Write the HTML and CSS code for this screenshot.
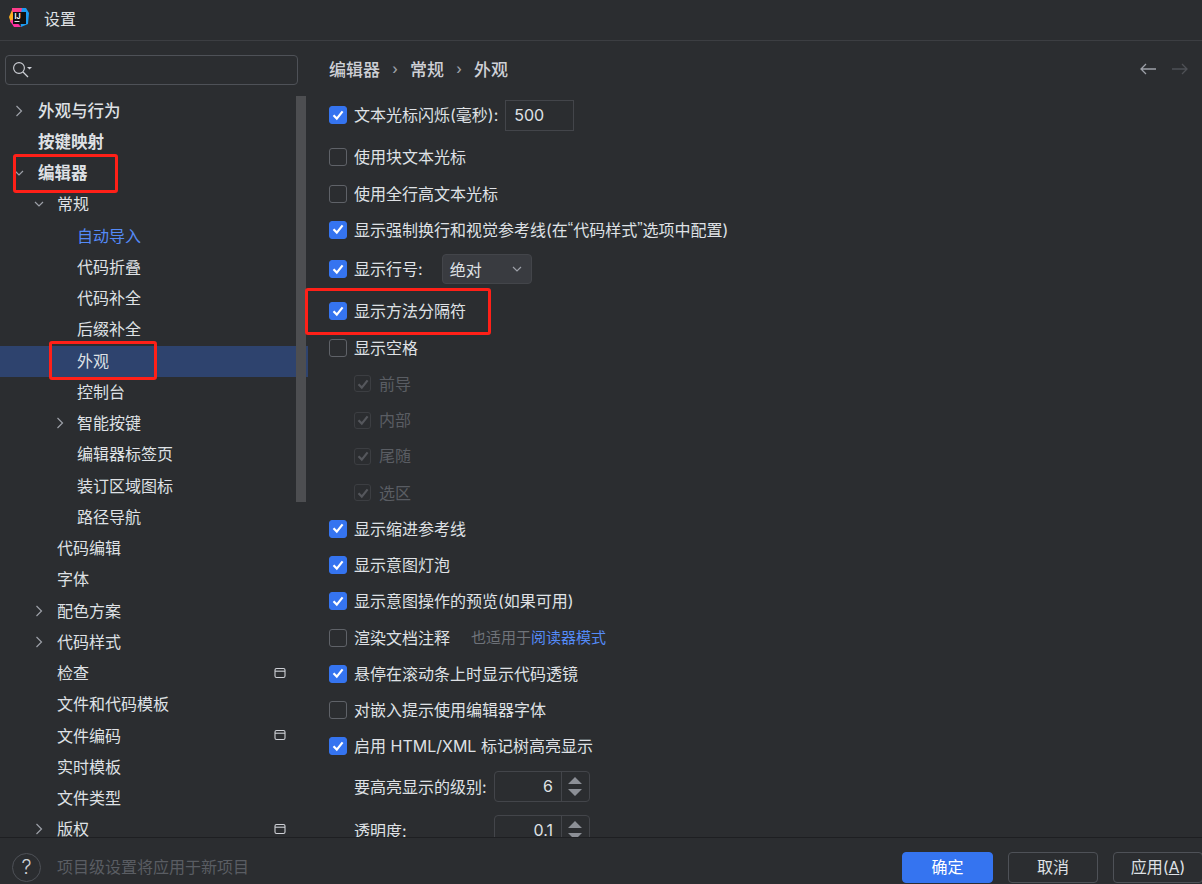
FILE: index.html
```html
<!DOCTYPE html>
<html lang="zh-CN">
<head>
    <meta charset="UTF-8">
    <meta name="viewport" content="width=device-width, initial-scale=1.0">
    <title>设置</title>
    <link rel="stylesheet" href="styles.css">
</head>
<body>
    <svg class="defs" width="0" height="0">
        <symbol id="i-right" viewBox="0 0 12 12"><path d="M3.5 1 8.5 6 3.5 11" fill="none" stroke="#9da0a8" stroke-width="1.2"/></symbol>
        <symbol id="i-down" viewBox="0 0 12 12"><path d="M2 4 6 8 10 4" fill="none" stroke="#9da0a8" stroke-width="1.2"/></symbol>
        <symbol id="i-badge" viewBox="0 0 12 12"><rect x="1" y="1.5" width="10" height="9" rx="1.5" fill="none" stroke="#ced0d6" stroke-width="1.1"/><path d="M1 4.2H11" stroke="#ced0d6" stroke-width="1.1"/></symbol>
        <symbol id="i-check" viewBox="0 0 18 18"><path d="M4.5 9.2 7.8 12.6 13.6 5.4" fill="none" stroke="#fff" stroke-width="2.2"/></symbol>
        <symbol id="i-check-off" viewBox="0 0 18 18"><path d="M4.5 9.2 7.8 12.6 13.6 5.4" fill="none" stroke="#55575c" stroke-width="2.2"/></symbol>
        <symbol id="i-spin" viewBox="0 0 16 24"><path d="M8 3 15 10H1Z M8 22 1 15H15Z" fill="#8c8f96"/></symbol>
    </svg>

    <div class="window">
        <header class="titlebar">
            <svg class="logo" width="20" height="20" viewBox="0 0 20 20">
                <path d="M11 0h6l3 5-1 11-7 3Z" fill="#1c9bf0"/>
                <path d="M3 0h10l-1 5-9 3Z" fill="#ff3d8b"/>
                <path d="M0 9 3 2l3 13H2Z" fill="#ffb01f"/>
                <path d="M1 13l4-2 7 8H5Z" fill="#ff2fa0"/>
                <rect x="4" y="4" width="13" height="12" fill="#111"/>
                <text x="5.5" y="10.5" class="logo-text">IJ</text>
                <rect x="5.5" y="13" width="5" height="1" fill="#ddd"/>
            </svg>
            <span>设置</span>
        </header>

        <div class="main">
            <aside class="sidebar">
                <div class="search">
                    <svg width="20" height="18" viewBox="0 0 20 18">
                        <circle cx="6" cy="7" r="5.4" fill="none" stroke="#ced0d6" stroke-width="1.1"/>
                        <path d="M10 11 15 16" stroke="#ced0d6" stroke-width="1.2"/>
                        <path d="M14 6h5L16.5 8.5Z" fill="#ced0d6"/>
                    </svg>
                </div>
                <div class="tree-wrap">
                    <div class="tree">
                        <div class="row lv0 medium"><svg class="arrow"><use href="#i-right"/></svg>外观与行为</div>
                        <div class="row lv0 bold"><span class="arrow"></span>按键映射</div>
                        <div class="row lv0 bold"><svg class="arrow"><use href="#i-down"/></svg>编辑器</div>
                        <div class="row lv1"><svg class="arrow"><use href="#i-down"/></svg>常规</div>
                        <div class="row lv2 link"><span class="arrow"></span>自动导入</div>
                        <div class="row lv2"><span class="arrow"></span>代码折叠</div>
                        <div class="row lv2"><span class="arrow"></span>代码补全</div>
                        <div class="row lv2"><span class="arrow"></span>后缀补全</div>
                        <div class="row lv2 selected"><span class="arrow"></span>外观</div>
                        <div class="row lv2"><span class="arrow"></span>控制台</div>
                        <div class="row lv2"><svg class="arrow"><use href="#i-right"/></svg>智能按键</div>
                        <div class="row lv2"><span class="arrow"></span>编辑器标签页</div>
                        <div class="row lv2"><span class="arrow"></span>装订区域图标</div>
                        <div class="row lv2"><span class="arrow"></span>路径导航</div>
                        <div class="row lv1"><span class="arrow"></span>代码编辑</div>
                        <div class="row lv1"><span class="arrow"></span>字体</div>
                        <div class="row lv1"><svg class="arrow"><use href="#i-right"/></svg>配色方案</div>
                        <div class="row lv1"><svg class="arrow"><use href="#i-right"/></svg>代码样式</div>
                        <div class="row lv1"><span class="arrow"></span>检查<svg class="badge"><use href="#i-badge"/></svg></div>
                        <div class="row lv1"><span class="arrow"></span>文件和代码模板</div>
                        <div class="row lv1"><span class="arrow"></span>文件编码<svg class="badge"><use href="#i-badge"/></svg></div>
                        <div class="row lv1"><span class="arrow"></span>实时模板</div>
                        <div class="row lv1"><span class="arrow"></span>文件类型</div>
                        <div class="row lv1"><svg class="arrow"><use href="#i-right"/></svg>版权<svg class="badge"><use href="#i-badge"/></svg></div>
                    </div>
                    <div class="scrollbar"></div>
                </div>
            </aside>

            <section class="panel">
                <div class="crumbs">
                    <span>编辑器</span><i>›</i><span>常规</span><i>›</i><span>外观</span>
                    <div class="nav">
                        <svg width="18" height="14" viewBox="0 0 18 14"><path d="M17 7H2M7 2 2 7l5 5" fill="none" stroke="#9da0a8" stroke-width="1.3"/></svg>
                        <svg width="18" height="14" viewBox="0 0 18 14"><path d="M2 7H17M12 2 17 7l-5 5" fill="none" stroke="#4e5055" stroke-width="1.3"/></svg>
                    </div>
                </div>

                <div class="opt first"><span class="box on"><svg><use href="#i-check"/></svg></span>文本光标闪烁(毫秒):<span class="field">500</span></div>
                <div class="opt gap-6"><span class="box"></span>使用块文本光标</div>
                <div class="opt"><span class="box"></span>使用全行高文本光标</div>
                <div class="opt"><span class="box on"><svg><use href="#i-check"/></svg></span>显示强制换行和视觉参考线(在<span class="quote">“</span>代码样式<span class="quote">”</span>选项中配置)</div>
                <div class="opt gap-3"><span class="box on"><svg><use href="#i-check"/></svg></span>显示行号:<span class="select">绝对<svg width="12" height="12"><use href="#i-down"/></svg></span></div>
                <div class="opt gap-6"><span class="box on"><svg><use href="#i-check"/></svg></span>显示方法分隔符</div>
                <div class="opt"><span class="box"></span>显示空格</div>
                <div class="opt sub off"><span class="box"><svg><use href="#i-check-off"/></svg></span>前导</div>
                <div class="opt sub off"><span class="box"><svg><use href="#i-check-off"/></svg></span>内部</div>
                <div class="opt sub off"><span class="box"><svg><use href="#i-check-off"/></svg></span>尾随</div>
                <div class="opt sub off"><span class="box"><svg><use href="#i-check-off"/></svg></span>选区</div>
                <div class="opt"><span class="box on"><svg><use href="#i-check"/></svg></span>显示缩进参考线</div>
                <div class="opt"><span class="box on"><svg><use href="#i-check"/></svg></span>显示意图灯泡</div>
                <div class="opt"><span class="box on"><svg><use href="#i-check"/></svg></span>显示意图操作的预览(如果可用)</div>
                <div class="opt"><span class="box"></span>渲染文档注释<span class="hint">也适用于<a>阅读器模式</a></span></div>
                <div class="opt"><span class="box on"><svg><use href="#i-check"/></svg></span>悬停在滚动条上时显示代码透镜</div>
                <div class="opt"><span class="box"></span>对嵌入提示使用编辑器字体</div>
                <div class="opt"><span class="box on"><svg><use href="#i-check"/></svg></span>启用 HTML/XML 标记树高亮显示</div>
                <div class="opt num gap-4"><label>要高亮显示的级别:</label><span class="spinner"><b>6</b><em><svg width="16" height="24"><use href="#i-spin"/></svg></em></span></div>
                <div class="opt num gap-8"><label>透明度:</label><span class="spinner"><b>0.1</b><em><svg width="16" height="24"><use href="#i-spin"/></svg></em></span></div>
            </section>
        </div>

        <footer class="footer">
            <span class="help">?</span>
            <span class="note">项目级设置将应用于新项目</span>
            <div class="buttons">
                <button class="primary">确定</button>
                <button>取消</button>
                <button>应用(<u>A</u>)</button>
            </div>
        </footer>

        <!-- red annotation boxes drawn on top of the screenshot -->
        <div class="mark mark-tree"></div>
        <div class="mark mark-item"></div>
        <div class="mark mark-opt"></div>
    </div>
</body>
</html>
```

FILE: styles.css
```css
* {
    box-sizing: border-box;
}
body {
    margin: 0;
    background-color: #2b2d30;
    color: #dfe1e5;
    font-family: Inter, "Noto Sans CJK SC", sans-serif;
    font-size: 16px;
}
.defs {
    position: absolute;
}
.window {
    position: relative;
    width: 1202px;
    height: 884px;
    display: flex;
    flex-direction: column;
    overflow: hidden;
}
.titlebar {
    height: 41px;
    flex: none;
    display: flex;
    align-items: center;
    padding-left: 9px;
    padding-bottom: 5px;
    border-bottom: 1px solid #3c3e42;
}
.titlebar span {
    margin-left: 15px;
}
.logo-text {
    font-size: 7px;
    font-weight: 700;
    fill: #fff;
}
.main {
    flex: 1;
    display: flex;
    min-height: 0;
}

/* left tree */
.sidebar {
    position: relative;
    z-index: 1;
    width: 308px;
    flex: none;
    overflow: hidden;
}
.search {
    height: 30px;
    width: 293px;
    margin: 14px 0 0 5px;
    border: 1px solid #4e5157;
    border-radius: 4px;
    padding: 5px 0 0 7px;
}
.tree-wrap {
    position: relative;
    margin-top: 11px;
}
.row {
    height: 31.25px;
    padding-bottom: 4px;
    display: flex;
    align-items: center;
    white-space: nowrap;
    position: relative;
}
.arrow {
    width: 12px;
    height: 12px;
    flex: none;
    margin-top: 2px;
}
.lv0 {
    padding-left: 13px;
}
.lv0 .arrow {
    margin-right: 13px;
}
.lv1 {
    padding-left: 33px;
}
.lv1 .arrow {
    margin-right: 12px;
}
.lv2 {
    padding-left: 54px;
}
.lv2 .arrow {
    margin-right: 11px;
}
.medium,
.bold {
    font-size: 16.5px;
}
.medium {
    font-weight: 500;
}
.bold {
    font-weight: 700;
}
.link {
    color: #548af7;
}
.selected {
    background-color: #2e436e;
}
.badge {
    position: absolute;
    left: 274px;
    top: 8px;
    width: 12px;
    height: 12px;
}
.scrollbar {
    position: absolute;
    left: 296px;
    top: 0;
    width: 10px;
    height: 406px;
    background-color: #4d4e51;
}

/* right panel */
.panel {
    flex: 1;
    padding-left: 329px;
    margin-left: -308px;
    overflow: hidden;
    min-width: 0;
}
.crumbs {
    height: 29px;
    margin-top: 13px;
    display: flex;
    align-items: center;
    font-size: 17px;
    font-weight: 500;
    color: #ced0d6;
    position: relative;
}
.crumbs i {
    font-style: normal;
    width: 30px;
    text-align: center;
    color: #9da0a8;
    font-size: 14px;
}
.nav {
    position: absolute;
    right: 14px;
    top: 8px;
    display: flex;
    gap: 13px;
}
.opt {
    height: 36.25px;
    display: flex;
    align-items: center;
    white-space: nowrap;
}
.first {
    margin-top: 13px;
}
.gap-6 {
    margin-top: 6px;
}
.gap-3 {
    margin-top: 3px;
}
.gap-4 {
    margin-top: 4px;
}
.gap-8 {
    margin-top: 8px;
}
.box {
    width: 18px;
    height: 18px;
    flex: none;
    margin: 2px 7px 0 0;
    border: 1.5px solid #5f6268;
    border-radius: 3px;
}
.box svg {
    display: block;
    width: 18px;
    height: 18px;
    margin: -1.5px;
}
.box.on {
    background-color: #3574f0;
    border-color: #3574f0;
}
.quote {
    font-family: "Liberation Sans", sans-serif;
}
.sub {
    padding-left: 25px;
}
.off {
    color: #5a5d63;
}
.off .box {
    width: 17px;
    height: 17px;
    border-color: #3c3e42;
    margin-right: 8px;
}
.field {
    width: 69px;
    height: 31px;
    margin: 2px 0 0 7px;
    padding-left: 8px;
    line-height: 29px;
    border: 1px solid #43454a;
}
.select {
    width: 90px;
    height: 30px;
    margin: 2px 0 0 19px;
    padding: 0 8px 0 7px;
    display: flex;
    align-items: center;
    justify-content: space-between;
    background-color: #393b40;
    border: 1px solid #43454a;
    border-radius: 4px;
}
.hint {
    margin-left: 21px;
    font-size: 15px;
    color: #6f737a;
}
.hint a {
    color: #548af7;
}
.num label {
    width: 140px;
    padding-left: 25px;
    flex: none;
}
.spinner {
    width: 96px;
    height: 31px;
    margin: 2px 0 0 25px;
    display: flex;
    border: 1px solid #43454a;
    border-radius: 4px;
    flex: none;
}
.spinner b {
    flex: 1;
    font-weight: 400;
    text-align: right;
    padding-right: 8px;
    line-height: 29px;
}
.spinner em {
    width: 28px;
    flex: none;
    border-left: 1px solid #43454a;
    padding: 2px 0 0 5px;
}

/* bottom bar */
.footer {
    height: 47px;
    flex: none;
    border-top: 1px solid #1e1f22;
    display: flex;
    align-items: center;
    position: relative;
    z-index: 2;
    background-color: #2b2d30;
    padding: 13px 0 0 12px;
}
.help {
    width: 29px;
    height: 29px;
    border: 1px solid #4e5157;
    border-radius: 50%;
    text-align: center;
    line-height: 26px;
    font-size: 20px;
    font-weight: 300;
    color: #ced0d6;
}
.note {
    margin-left: 16px;
    padding-bottom: 3px;
    color: #5a5d63;
}
.buttons {
    margin-left: auto;
    margin-right: -1px;
    display: flex;
    gap: 15px;
}
button {
    width: 90px;
    height: 31px;
    padding: 0 0 3px;
    border: 1px solid #4e5157;
    border-radius: 4px;
    background: transparent;
    color: #dfe1e5;
    font: inherit;
}
button.primary {
    width: 91px;
    background-color: #3574f0;
    border-color: #3574f0;
    color: #fff;
}

.mark {
    position: absolute;
    border: 3px solid #ff2018;
    border-radius: 3px;
    z-index: 3;
}
.mark-tree {
    left: 13px;
    top: 154px;
    width: 105px;
    height: 39px;
}
.mark-item {
    left: 49px;
    top: 341px;
    width: 108px;
    height: 39px;
}
.mark-opt {
    left: 305px;
    top: 288px;
    width: 186px;
    height: 47px;
}
```
